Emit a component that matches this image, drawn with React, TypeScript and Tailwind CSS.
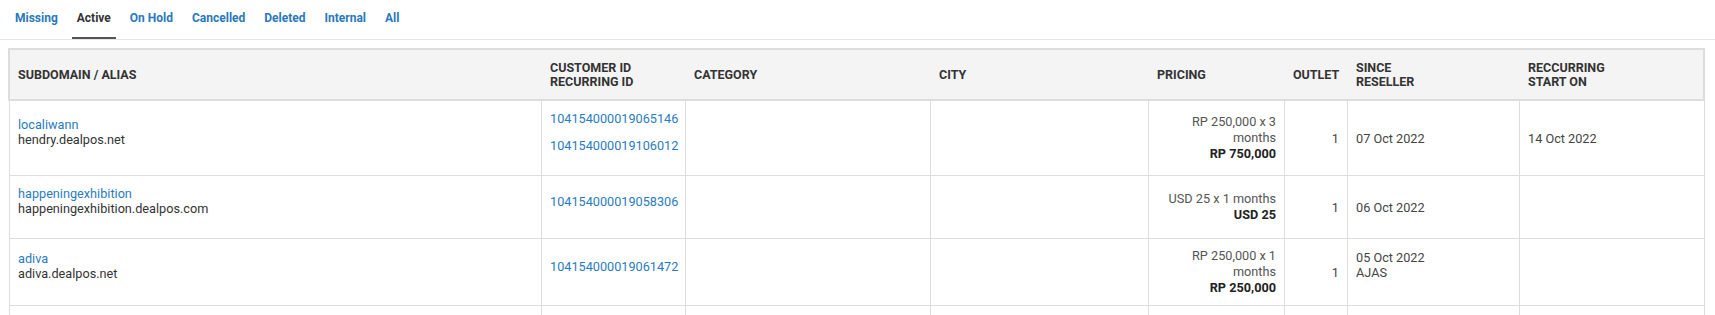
import React from "react";

const tabs = ["Missing", "Active", "On Hold", "Cancelled", "Deleted", "Internal", "All"];

type Row = {
  alias: string;
  domain: string;
  ids: string[];
  price: string;
  total: string;
  outlet: string;
  since: string;
  reseller?: string;
  start?: string;
};

const rows: Row[] = [
  {
    alias: "localiwann",
    domain: "hendry.dealpos.net",
    ids: ["104154000019065146", "104154000019106012"],
    price: "RP 250,000 x 3 months",
    total: "RP 750,000",
    outlet: "1",
    since: "07 Oct 2022",
    start: "14 Oct 2022",
  },
  {
    alias: "happeningexhibition",
    domain: "happeningexhibition.dealpos.com",
    ids: ["104154000019058306"],
    price: "USD 25 x 1 months",
    total: "USD 25",
    outlet: "1",
    since: "06 Oct 2022",
  },
  {
    alias: "adiva",
    domain: "adiva.dealpos.net",
    ids: ["104154000019061472"],
    price: "RP 250,000 x 1 months",
    total: "RP 250,000",
    outlet: "1",
    since: "05 Oct 2022",
    reseller: "AJAS",
  },
  {
    alias: "tokomaju",
    domain: "tokomaju.dealpos.net",
    ids: ["104154000019055218"],
    price: "RP 250,000 x 1 months",
    total: "RP 250,000",
    outlet: "1",
    since: "04 Oct 2022",
  },
];

const base = "border-r border-b border-[#dddddd] px-[8px] flex flex-col justify-center";
const cell = base + " py-[10px]";

export default function App() {
  return (
    <div className="font-[Roboto,sans-serif] bg-white min-h-screen text-[#444]">
      {/* Tabs */}
      <div className="h-[40px] border-b border-[#e6e6e6] flex items-stretch pl-[10px]">
        {tabs.map((t) => {
          const active = t === "Active";
          return (
            <div
              key={t}
              className={
                active
                  ? "mr-[9px] px-[5px] flex items-center text-[12px] font-bold text-[#333] border-b-2 border-[#555] pb-[2px]"
                  : "mr-[9px] px-[5px] flex items-center text-[12px] font-bold text-[#2a78bd] border-b-2 border-transparent pb-[2px]"
              }
            >
              {t}
            </div>
          );
        })}
      </div>

      {/* Table */}
      <div className="ml-[8px] mt-[8px] w-[1697px]">
        <div className="border-2 border-[#dddddd] bg-[#f4f4f4] h-[53px] grid grid-cols-[532px_144px_245px_218px_136px_63px_172px_183px] text-[12.5px] font-bold text-[#333] uppercase leading-[14px]">
          <div className="px-[8px] flex items-center">Subdomain / Alias</div>
          <div className="px-[8px] flex flex-col justify-center">
            <span>Customer ID</span>
            <span>Recurring ID</span>
          </div>
          <div className="px-[8px] flex items-center">Category</div>
          <div className="px-[8px] flex items-center">City</div>
          <div className="px-[8px] flex items-center">Pricing</div>
          <div className="px-[8px] flex items-center">Outlet</div>
          <div className="px-[8px] flex flex-col justify-center">
            <span>Since</span>
            <span>Reseller</span>
          </div>
          <div className="px-[8px] flex flex-col justify-center">
            <span>Reccurring</span>
            <span>Start On</span>
          </div>
        </div>

        <div className="ml-[1px] w-[1696px] text-[12.7px] leading-[15px]">
          {rows.map((r) => (
            <div
              key={r.alias}
              className="grid grid-cols-[533px_144px_245px_218px_136px_63px_172px_185px]"
            >
              <div className={cell + " border-l"}>
                <div className="mb-[12px]">
                  <div className="text-[#2a7bbf]">{r.alias}</div>
                  <div className="text-[#333]">{r.domain}</div>
                </div>
              </div>
              <div className={cell}>
                {r.ids.map((id) => (
                  <div key={id} className="mb-[12px] text-[#2a7bbf]">
                    {id}
                  </div>
                ))}
              </div>
              <div className={cell}></div>
              <div className={cell}></div>
              <div className={base + " py-[9px] text-right leading-[16px]"}>
                <div className="text-[#555]">{r.price}</div>
                <div className="font-bold text-[#222]">{r.total}</div>
              </div>
              <div className={cell + " text-right text-[#444]"}>{r.outlet}</div>
              <div className={cell + " text-[#444]"}>
                {r.reseller ? (
                  <div className="mb-[15px]">
                    <div>{r.since}</div>
                    <div>{r.reseller}</div>
                  </div>
                ) : (
                  <div>{r.since}</div>
                )}
              </div>
              <div className={cell + " text-[#444]"}>{r.start ?? ""}</div>
            </div>
          ))}
        </div>
      </div>
    </div>
  );
}
